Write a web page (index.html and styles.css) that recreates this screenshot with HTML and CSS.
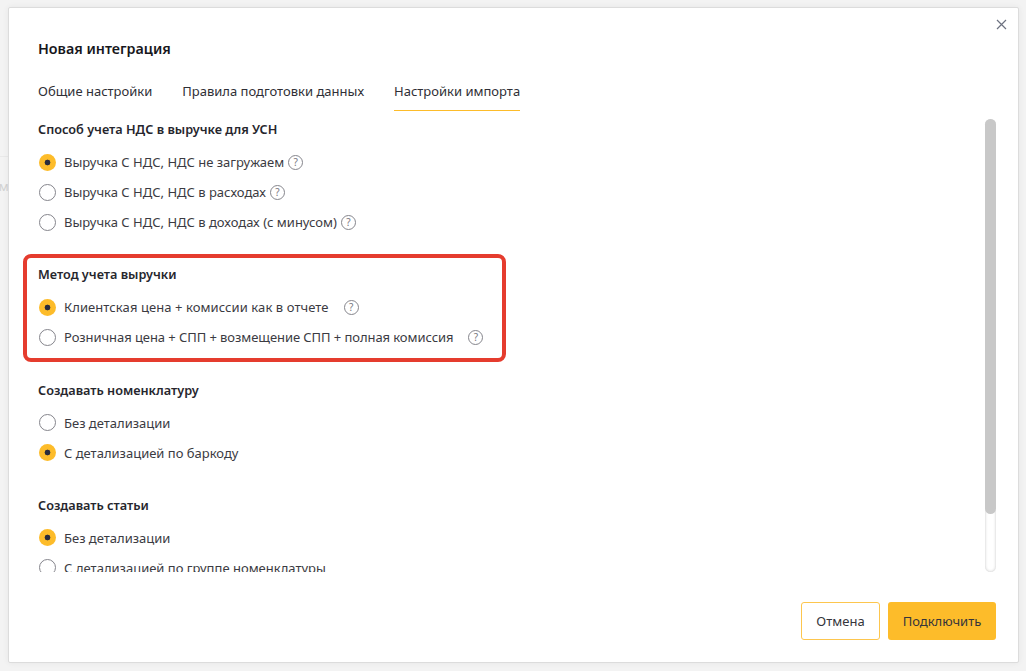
FILE: index.html
```html
<!DOCTYPE html>
<html lang="ru">
<head>
<meta charset="utf-8">
<title>Новая интеграция</title>
<link rel="stylesheet" href="styles.css">
</head>
<body>
<div class="backdrop"><span class="backdrop-text">ом</span></div>
<div class="modal">
  <button class="close" aria-label="Закрыть">
    <svg width="11" height="11" viewBox="0 0 11 11"><path d="M1 1L10 10M10 1L1 10" stroke="#6d7280" stroke-width="1.2" fill="none"/></svg>
  </button>
  <h1 class="title">Новая интеграция</h1>
  <nav class="tabs">
    <span class="tab">Общие настройки</span>
    <span class="tab">Правила подготовки данных</span>
    <span class="tab active">Настройки импорта</span>
  </nav>
  <div class="body">
    <div class="content">
      <section class="group">
        <h2 class="group-title">Способ учета НДС в выручке для УСН</h2>
        <div class="row"><span class="radio on"></span><span>Выручка С НДС, НДС не загружаем</span><span class="help">?</span></div>
        <div class="row"><span class="radio"></span><span>Выручка С НДС, НДС в расходах</span><span class="help">?</span></div>
        <div class="row"><span class="radio"></span><span>Выручка С НДС, НДС в доходах (с минусом)</span><span class="help">?</span></div>
      </section>
      <section class="group marked">
        <h2 class="group-title">Метод учета выручки</h2>
        <div class="row"><span class="radio on"></span><span class="loose">Клиентская цена + комиссии как в отчете</span><span class="help wide">?</span></div>
        <div class="row"><span class="radio"></span><span class="tight">Розничная цена + СПП + возмещение СПП + полная комиссия</span><span class="help wide">?</span></div>
      </section>
      <section class="group">
        <h2 class="group-title">Создавать номенклатуру</h2>
        <div class="row"><span class="radio"></span><span>Без детализации</span></div>
        <div class="row"><span class="radio on"></span><span>С детализацией по баркоду</span></div>
      </section>
      <section class="group">
        <h2 class="group-title">Создавать статьи</h2>
        <div class="row"><span class="radio on"></span><span>Без детализации</span></div>
        <div class="row"><span class="radio"></span><span>С детализацией по группе номенклатуры</span></div>
      </section>
    </div>
    <div class="scrollbar"><div class="thumb"></div></div>
  </div>
  <footer class="footer">
    <button class="btn ghost">Отмена</button>
    <button class="btn primary">Подключить</button>
  </footer>
</div>
</body>
</html>
```
FILE: styles.css
```css
* { box-sizing: border-box; }
html, body { margin: 0; height: 671px; overflow: hidden; }
body {
  position: relative;
  background: #f3f3f3;
  font-family: "Noto Sans", "Open Sans", sans-serif;
  font-size: 13px;
  color: #3b3b42;
  padding: 7px 7px 8px 8px;
}
.backdrop {
  position: absolute;
  left: 0; top: 156px;
  width: 40px; height: 60px;
  border-top: 1px solid #e9e9e9;
}
.backdrop-text {
  position: absolute;
  left: -9px; top: 20px;
  color: #d2d2d2;
  font-size: 13px;
}
.modal {
  position: relative;
  height: 100%;
  background: #fff;
  border: 1px solid #dcdcdc;
  border-radius: 2px;
  box-shadow: 0 0 6px rgba(0,0,0,.06);
  display: flex;
  flex-direction: column;
  padding: 0 22px 22px 29px;
}
.close {
  position: absolute;
  right: 11px; top: 11px;
  padding: 0; border: 0;
  background: none;
  display: flex;
}
.title {
  margin: 31px 0 0;
  font-size: 14.3px;
  line-height: 20px;
  font-weight: 600;
  color: #17171c;
}
.tabs {
  display: flex;
  gap: 30px;
  margin-top: 10px;
}
.tab {
  height: 42px;
  padding-top: 12px;
  line-height: 20px;
  color: #2f2f36;
}
.tab.active { border-bottom: 1px solid #fdbc2a; }
.body {
  flex: 1;
  min-height: 0;
  display: flex;
  justify-content: space-between;
  margin-bottom: 30px;
}
.content {
  flex: 1;
  overflow: hidden;
  margin-left: -16px;
  padding: 8px 0 0 16px;
}
.group { position: relative; margin-bottom: 27.34px; }
.marked::after {
  content: "";
  box-sizing: border-box;
  position: absolute;
  left: -15px; top: -10px;
  width: 483px; height: 108px;
  border: 4px solid #e53c2e;
  border-radius: 8px;
}
.group-title {
  margin: 0 0 8px;
  font-size: 12.7px;
  line-height: 20px;
  font-weight: 600;
  color: #26262d;
}
.row {
  display: flex;
  align-items: center;
  height: 30px;
  white-space: nowrap;
}
.loose { letter-spacing: .08px; }
.tight { letter-spacing: -.07px; }
.radio {
  flex: none;
  width: 17px; height: 17px;
  margin: 0 8px 0 1px;
  border: 1px solid #85858c;
  border-radius: 50%;
  background: #fff;
}
.radio.on {
  border: 0;
  background: radial-gradient(circle, #2a2c3c 0 2.6px, #fdbc2a 3.2px);
}
.help {
  flex: none;
  width: 15px; height: 15px;
  margin-left: 4px;
  border: 1px solid #85858c;
  border-radius: 50%;
  color: #77777e;
  font-size: 10px;
  line-height: 13px;
  text-align: center;
}
.help.wide { margin-left: 15px; }
.scrollbar {
  flex: none;
  width: 11px;
  margin-top: 8px;
  border-radius: 6px;
  background: #fff;
  box-shadow: inset 0 0 3px #c4c4c4;
}
.thumb {
  height: 395px;
  border-radius: 6px;
  background: #c8c8c8;
}
.footer {
  display: flex;
  justify-content: flex-end;
  gap: 8px;
}
.btn {
  height: 38px;
  border-radius: 3px;
  font: inherit;
  color: #35353b;
}
.ghost { width: 79px; background: #fff; border: 1px solid #fdc64e; }
.primary { width: 108px; background: #fdbc2a; border: 0; }
```
